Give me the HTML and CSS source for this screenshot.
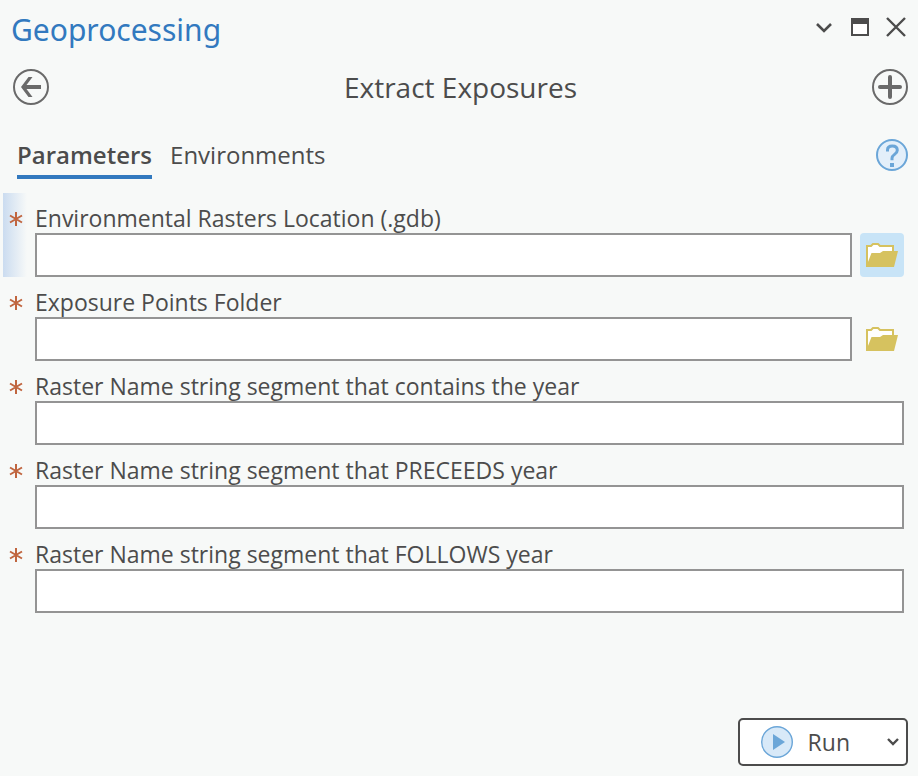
FILE: index.html
```html
<!DOCTYPE html>
<html lang="en">
<head>
<meta charset="utf-8">
<meta name="viewport" content="width=device-width, initial-scale=1">
<title>Geoprocessing</title>
<link rel="stylesheet" href="styles.css">
</head>
<body>
<main class="pane">
  <header class="titlebar">
    <h1 class="pane-title">Geoprocessing</h1>
    <div class="window-controls">
      <button class="icon-button" type="button" aria-label="Pane options"><svg width="20" height="20" viewBox="0 0 20 20"><path d="M3 7l7 7 7-7" fill="none" stroke="#4c4c4c" stroke-width="2.6"/></svg></button>
      <button class="icon-button" type="button" aria-label="Maximize"><svg width="20" height="20" viewBox="0 0 20 20"><path d="M2 2h16v16H2z" fill="#fff" stroke="#4c4c4c" stroke-width="2"/><path d="M1 1h18v6H1z" fill="#4c4c4c"/></svg></button>
      <button class="icon-button" type="button" aria-label="Close"><svg width="20" height="20" viewBox="0 0 20 20"><path d="M1 1l18 18M19 1L1 19" fill="none" stroke="#4c4c4c" stroke-width="2.4"/></svg></button>
    </div>
  </header>

  <div class="toolbar">
    <button class="icon-button" type="button" aria-label="Back"><svg width="36" height="36" viewBox="0 0 36 36"><circle cx="18" cy="18" r="17" fill="none" stroke="#6a6a6a" stroke-width="2"/><path d="M8 18l7.500-10h4L13.500 16H28v4H13.500L19.500 28h-4z" fill="#6a6a6a"/></svg></button>
    <h2 class="tool-title">Extract Exposures</h2>
    <button class="icon-button" type="button" aria-label="Add"><svg width="36" height="36" viewBox="0 0 36 36"><circle cx="18" cy="18" r="17" fill="none" stroke="#6a6a6a" stroke-width="2"/><path d="M18 8v20M8 18h20" fill="none" stroke="#6a6a6a" stroke-width="4" stroke-linecap="round"/></svg></button>
  </div>

  <nav class="tabs">
    <a class="tab tab-active" href="#parameters">Parameters</a>
    <a class="tab" href="#environments">Environments</a>
    <button class="icon-button help" type="button" aria-label="Help"><svg width="32" height="32" viewBox="0 0 32 32"><circle cx="16" cy="16" r="15" fill="#e3effa" stroke="#6ba6d8" stroke-width="2"/><path d="M11.500 12.500V11c0-2.500 2-4 4.800-4 3 0 5 1.500 5 4.200 0 4.300-5.300 4-5.300 8v2" fill="none" stroke="#6ba6d8" stroke-width="3"/><path d="M14 24h4v4h-4z" fill="#6ba6d8"/></svg></button>
  </nav>

  <form class="parameters" id="parameters">
    <div class="field field-current">
      <span class="required"><svg width="14" height="14" viewBox="0 0 14 14"><path d="M7 0v14M1 3.500l12 7M13 3.500l-12 7" stroke="#c0653f" stroke-width="2"/></svg></span>
      <label for="rasters">Environmental Rasters Location (.gdb)</label>
      <div class="entry"><input id="rasters" type="text"><button class="browse browse-hot" type="button" aria-label="Browse for rasters location"><svg width="44" height="44" viewBox="0 0 44 44"><path d="M7 33V13h4l2-2h5l2 2h13v20z" fill="#fff" stroke="#d6c25f" stroke-width="2"/><path d="M6 34l5.500-14H20l3-2h15l-4 16z" fill="#d6c25f"/></svg></button></div>
    </div>
    <div class="field">
      <span class="required"><svg width="14" height="14" viewBox="0 0 14 14"><path d="M7 0v14M1 3.500l12 7M13 3.500l-12 7" stroke="#c0653f" stroke-width="2"/></svg></span>
      <label for="points">Exposure Points Folder</label>
      <div class="entry"><input id="points" type="text"><button class="browse" type="button" aria-label="Browse for points folder"><svg width="44" height="44" viewBox="0 0 44 44"><path d="M7 33V13h4l2-2h5l2 2h13v20z" fill="#fff" stroke="#d6c25f" stroke-width="2"/><path d="M6 34l5.500-14H20l3-2h15l-4 16z" fill="#d6c25f"/></svg></button></div>
    </div>
    <div class="field">
      <span class="required"><svg width="14" height="14" viewBox="0 0 14 14"><path d="M7 0v14M1 3.500l12 7M13 3.500l-12 7" stroke="#c0653f" stroke-width="2"/></svg></span>
      <label for="year">Raster Name string segment that contains the year</label>
      <div class="entry"><input id="year" type="text"></div>
    </div>
    <div class="field">
      <span class="required"><svg width="14" height="14" viewBox="0 0 14 14"><path d="M7 0v14M1 3.500l12 7M13 3.500l-12 7" stroke="#c0653f" stroke-width="2"/></svg></span>
      <label for="before">Raster Name string segment that PRECEEDS year</label>
      <div class="entry"><input id="before" type="text"></div>
    </div>
    <div class="field">
      <span class="required"><svg width="14" height="14" viewBox="0 0 14 14"><path d="M7 0v14M1 3.500l12 7M13 3.500l-12 7" stroke="#c0653f" stroke-width="2"/></svg></span>
      <label for="after">Raster Name string segment that FOLLOWS year</label>
      <div class="entry"><input id="after" type="text"></div>
    </div>
  </form>

  <footer class="footer">
    <div class="split-button">
      <button class="run" type="button"><svg width="32" height="32" viewBox="0 0 32 32"><circle cx="16" cy="16" r="15.300" fill="#d8e9f8" stroke="#6ba6d8" stroke-width="1.400"/><path d="M12 8l12 8-12 8z" fill="#6ba6d8"/></svg>Run</button>
      <button class="run-menu" type="button" aria-label="Run options"><svg width="12" height="8" viewBox="0 0 12 8"><path d="M1 1l5 5 5-5" fill="none" stroke="#4c4c4c" stroke-width="2.400"/></svg></button>
    </div>
  </footer>
</main>
</body>
</html>
```
FILE: styles.css
```css
* {
  box-sizing: border-box;
}

body {
  margin: 0;
  background: #f7f9f8;
  color: #4c4c4c;
  font: 23px/28px "Open Sans", "Noto Sans", sans-serif;
}

button,
input {
  font: inherit;
  color: inherit;
}

button {
  padding: 0;
  border: 0;
  background: none;
}

svg {
  display: block;
}

h1,
h2 {
  margin: 0;
  font-weight: 400;
}

.pane {
  display: flex;
  flex-direction: column;
  min-height: 100vh;
}

.titlebar {
  display: flex;
  align-items: center;
  justify-content: space-between;
  height: 54px;
  padding: 0 12px 0 11px;
}

.pane-title {
  color: #3279bf;
  font-family: "Noto Sans", "Open Sans", sans-serif;
  font-size: 30px;
  line-height: 40px;
  padding-top: 6px;
}

.window-controls {
  display: flex;
  gap: 16px;
}

.toolbar {
  display: flex;
  align-items: center;
  justify-content: space-between;
  height: 66px;
  padding: 0 10px 0 13px;
}

.tool-title {
  font-size: 28px;
  line-height: 36px;
}

.tabs {
  display: flex;
  align-items: center;
  gap: 18px;
  height: 70px;
  padding: 0 10px 0 17px;
}

.tab {
  padding-top: 4px;
  border-bottom: 4px solid transparent;
  color: inherit;
  font-size: 24px;
  line-height: 40px;
  text-decoration: none;
}

.tab-active {
  border-color: #3279bf;
  font-weight: 600;
}

.help {
  margin-left: auto;
}

.parameters {
  padding: 3px 0 0 3px;
}

.field {
  display: grid;
  grid-template-columns: 32px 1fr;
  padding: 12px 14px 0 0;
}

.field label {
  padding-bottom: 2px;
  line-height: 26px;
}

.field-current {
  background: linear-gradient(to right, #cbdcf0, #f7f9f8 24px);
}

.required {
  padding: 7px 0 0 6px;
}

.entry {
  display: flex;
  grid-column: 2;
  gap: 8px;
}

.entry input {
  flex: 1;
  min-width: 0;
  height: 44px;
  padding: 0 8px;
  border: 2px solid #949494;
  border-radius: 0;
  background: #fff;
}

.browse {
  border-radius: 4px;
}

.browse-hot {
  background: #c8e4f7;
}

.footer {
  display: flex;
  justify-content: flex-end;
  margin-top: auto;
  padding: 10px;
}

.split-button {
  display: flex;
  height: 48px;
  border: 2px solid #4c4c4c;
  border-radius: 5px;
  background: #fff;
}

.run {
  display: flex;
  align-items: center;
  gap: 15px;
  padding: 0 21px;
}

.run-menu {
  padding: 0 7px 0 16px;
}
```
